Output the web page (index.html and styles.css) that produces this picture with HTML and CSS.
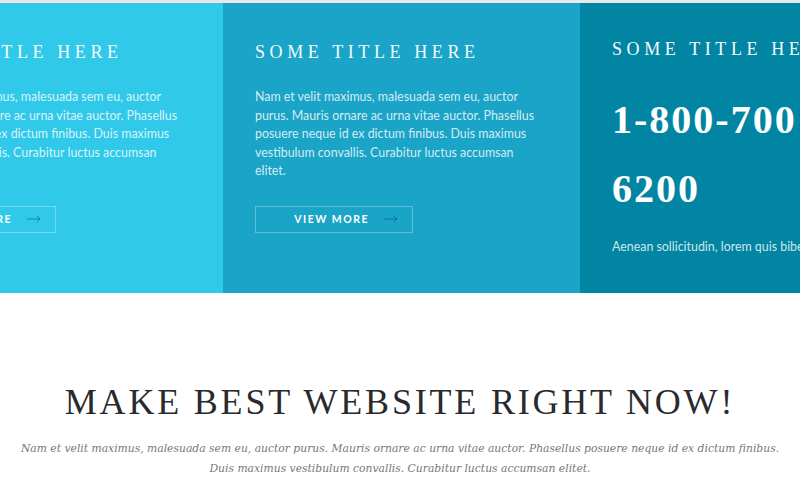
FILE: index.html
```html
<!DOCTYPE html>
<html>
<head>
<meta charset="utf-8">
<link rel="stylesheet" href="styles.css">
</head>
<body>
<div class="topline"></div>
<section class="features">
  <div class="col col-light">
    <h3 class="col-title">SOME TITLE HERE</h3>
    <p class="col-text">Nam et velit maximus, malesuada sem eu, auctor purus. Mauris ornare ac urna vitae auctor. Phasellus posuere neque id ex dictum finibus. Duis maximus vestibulum convallis. Curabitur luctus accumsan elitet.</p>
    <a class="btn" href="#"><span>VIEW MORE</span><svg class="arrow" width="14" height="8" viewBox="0 0 14 8"><path d="M0 4H13M9.5 0.8L13 4L9.5 7.2" fill="none" stroke="currentColor" stroke-width="1"/></svg></a>
  </div>
  <div class="col col-mid">
    <h3 class="col-title">SOME TITLE HERE</h3>
    <p class="col-text">Nam et velit maximus, malesuada sem eu, auctor purus. Mauris ornare ac urna vitae auctor. Phasellus posuere neque id ex dictum finibus. Duis maximus vestibulum convallis. Curabitur luctus accumsan elitet.</p>
    <a class="btn" href="#"><span>VIEW MORE</span><svg class="arrow" width="14" height="8" viewBox="0 0 14 8"><path d="M0 4H13M9.5 0.8L13 4L9.5 7.2" fill="none" stroke="currentColor" stroke-width="1"/></svg></a>
  </div>
  <div class="col col-dark">
    <h3 class="col-title">SOME TITLE HERE</h3>
    <div class="phone">1-800-700<br>6200</div>
    <p class="col-text nowrap">Aenean sollicitudin, lorem quis bibendum auctor, nisi elit consequat ipsum.</p>
  </div>
</section>
<section class="cta">
  <h2 class="cta-title">MAKE BEST WEBSITE RIGHT NOW!</h2>
  <p class="cta-text">Nam et velit maximus, malesuada sem eu, auctor purus. Mauris ornare ac urna vitae auctor. Phasellus posuere neque id ex dictum finibus.<br>Duis maximus vestibulum convallis. Curabitur luctus accumsan elitet.</p>
</section>
</body>
</html>
```
FILE: styles.css
```css
html, body {
  margin: 0;
  padding: 0;
  background: #fff;
  overflow: hidden;
  width: 800px;
  height: 500px;
}
.topline {
  height: 3px;
  background: #e6e8ea;
}
.features {
  display: flex;
  margin-left: -134px;
  width: 1071px;
}
.col {
  flex: 0 0 357px;
  height: 290px;
  box-sizing: border-box;
  padding: 37px 32px 0;
  color: #fff;
}
.col-light { background: #30c9e9; }
.col-mid { background: #1aa4c8; }
.col-dark { background: #0285a3; padding-top: 34px; }
.col-title {
  margin: 0;
  font-family: "Liberation Serif", serif;
  font-weight: normal;
  font-size: 18px;
  line-height: 24px;
  letter-spacing: 4.6px;
  color: #f4fbfd;
}
.col-text {
  margin: 24px 0 0;
  max-width: 282px;
  font-family: "Lato", sans-serif;
  font-size: 12.4px;
  line-height: 18.5px;
  color: rgba(255,255,255,0.82);
}
.nowrap { white-space: nowrap; max-width: none; margin-top: 15px; }
.btn {
  margin-top: 25px;
  display: flex;
  align-items: center;
  justify-content: flex-end;
  width: 158px;
  height: 27px;
  box-sizing: border-box;
  border: 1px solid rgba(255,255,255,0.3);
  padding-right: 14px;
  text-decoration: none;
  color: #fff;
  font-family: "Lato", sans-serif;
  font-weight: 700;
  font-size: 10.5px;
  letter-spacing: 1.5px;
}
.btn span { margin-right: 15px; }
.arrow { color: rgba(0,60,80,0.45); }
.phone {
  margin-top: 24px;
  font-family: "Liberation Serif", serif;
  font-weight: 700;
  font-size: 40px;
  line-height: 69px;
  letter-spacing: 2px;
  color: #fff;
}
.cta {
  text-align: center;
  padding-top: 87px;
}
.cta-title {
  margin: 0;
  font-family: "Liberation Serif", serif;
  font-weight: normal;
  font-size: 36px;
  line-height: 44px;
  letter-spacing: 2.8px;
  color: #2a2a2e;
}
.cta-text {
  margin: 15px 0 0;
  font-family: "DejaVu Serif", serif;
  font-style: italic;
  font-size: 10.75px;
  line-height: 20px;
  color: #777;
  white-space: nowrap;
}
```
